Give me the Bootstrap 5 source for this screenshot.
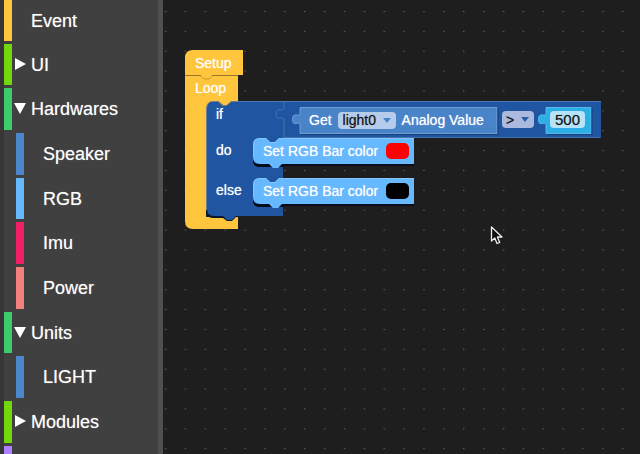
<!DOCTYPE html>
<html lang="en">
<head>
<meta charset="utf-8">
<meta name="viewport" content="width=device-width, initial-scale=1">
<title>Block editor</title>
<link href="https://cdn.jsdelivr.net/npm/bootstrap@5.3.0/dist/css/bootstrap.min.css" rel="stylesheet">
<style>
body{font-family:"Liberation Sans",Arial,sans-serif;background:#1e1e1e;color:#fff}
.toolbox{width:163px;background:#404040;border-left:4px solid #363636;border-right:5px solid #505050}
.toolbox ul{grid-template-rows:44px;grid-auto-rows:44px 45px 45px}
.toolbox li{padding-bottom:3px}
.cat{font-size:18px;line-height:20px;color:#fff;border-left:8px solid var(--c);padding-left:1px;text-shadow:0 0 1px #ffffff80}
.sub-cat{padding-left:12px}
.cat .twist{width:14px;height:14px;margin-right:4px;fill:#fff}
.yellow{--c:#ffc53d}.lime{--c:#73d80b}.green{--c:#3dcb6c}.navy{--c:#4c87cb}
.sky{--c:#66b8ff}.pink{--c:#ef2164}.coral{--c:#f58080}.violet{--c:#ae80ff}
.node,.shape,.pointer{position:absolute}
.shape{left:0;top:0}
.node{font-size:14px;line-height:16px;height:16px;text-shadow:0 0 1px #ffffffb0;white-space:nowrap}
.pick{position:relative;display:block;--a:#4a84c8}
.pick::after{content:"";position:absolute;right:5px;top:6px;border:4px solid transparent;border-top:5px solid var(--a);border-bottom:0;pointer-events:none}
.pick select,.num{appearance:none;border:0;border-radius:4px;font-size:14px;line-height:16px;height:17px;color:#111;padding:0 5px;display:block;text-shadow:0 0 1px #00000060}
.pick select{background:#b5cdea;width:58px}
.pick.op{--a:#2c5ea8}
.pick.op select{background:#aab9dd;width:32px;padding:0 4px}
.num{background:#b6e3f8;width:35px;text-align:center;font-size:15px}
.get-row{gap:6px}
.rgb-row{gap:8px}
.swatch{width:23px;height:16px;border:0;border-radius:5px;background:var(--s)}
.red{--s:#fe0000}.black{--s:#000}
</style>
<script src="https://cdn.jsdelivr.net/npm/bootstrap@5.3.0/dist/js/bootstrap.bundle.min.js"></script>
</head>
<body>
<div class="d-flex vh-100 overflow-hidden">
  <nav class="toolbox flex-shrink-0 overflow-hidden" aria-label="Block categories">
    <ul class="d-grid list-unstyled m-0">
      <li><button class="cat yellow btn rounded-0 border-end-0 border-top-0 border-bottom-0 py-0 pe-0 w-100 h-100 d-flex align-items-center"><span class="twist"></span>Event</button></li>
      <li><button class="cat lime btn rounded-0 border-end-0 border-top-0 border-bottom-0 py-0 pe-0 w-100 h-100 d-flex align-items-center"><svg class="twist" viewBox="0 0 14 14"><path d="M2 0L13 6L2 12Z"/></svg>UI</button></li>
      <li><button class="cat green btn rounded-0 border-end-0 border-top-0 border-bottom-0 py-0 pe-0 w-100 h-100 d-flex align-items-center"><svg class="twist" viewBox="0 0 14 14"><path d="M1 1H13L7 12Z"/></svg>Hardwares</button></li>
      <li class="sub-cat"><button class="cat navy btn rounded-0 border-end-0 border-top-0 border-bottom-0 py-0 pe-0 w-100 h-100 d-flex align-items-center"><span class="twist"></span>Speaker</button></li>
      <li class="sub-cat"><button class="cat sky btn rounded-0 border-end-0 border-top-0 border-bottom-0 py-0 pe-0 w-100 h-100 d-flex align-items-center"><span class="twist"></span>RGB</button></li>
      <li class="sub-cat"><button class="cat pink btn rounded-0 border-end-0 border-top-0 border-bottom-0 py-0 pe-0 w-100 h-100 d-flex align-items-center"><span class="twist"></span>Imu</button></li>
      <li class="sub-cat"><button class="cat coral btn rounded-0 border-end-0 border-top-0 border-bottom-0 py-0 pe-0 w-100 h-100 d-flex align-items-center"><span class="twist"></span>Power</button></li>
      <li><button class="cat green btn rounded-0 border-end-0 border-top-0 border-bottom-0 py-0 pe-0 w-100 h-100 d-flex align-items-center"><svg class="twist" viewBox="0 0 14 14"><path d="M1 1H13L7 12Z"/></svg>Units</button></li>
      <li class="sub-cat"><button class="cat navy btn rounded-0 border-end-0 border-top-0 border-bottom-0 py-0 pe-0 w-100 h-100 d-flex align-items-center"><span class="twist"></span>LIGHT</button></li>
      <li><button class="cat lime btn rounded-0 border-end-0 border-top-0 border-bottom-0 py-0 pe-0 w-100 h-100 d-flex align-items-center"><svg class="twist" viewBox="0 0 14 14"><path d="M2 0L13 6L2 12Z"/></svg>Modules</button></li>
      <li><button class="cat violet btn rounded-0 border-end-0 border-top-0 border-bottom-0 py-0 pe-0 w-100 h-100" aria-label="More"></button></li>
    </ul>
  </nav>
  <main class="position-relative flex-grow-1 overflow-hidden">
    <svg class="shape w-100 h-100" aria-hidden="true">
      <defs>
        <pattern id="dots" x="1.8" y="11" width="19.88" height="19.87" patternUnits="userSpaceOnUse"><rect width="1.5" height="1" fill="#606060"/></pattern>
      </defs>
      <rect width="100%" height="100%" fill="url(#dots)"/>
      <!-- shapes share one coordinate space, 163 wide toolbox included -->
      <g transform="translate(-163 0)">
        <path fill="#ffc53d" d="M185 76H238V102H206V217H238V229H193Q185 229 185 221V76Z"/>
        <path fill="#ffc53d" d="M193 50H243V75H213L209 79H204L200 75H185V58Q185 50 193 50Z"/>
        <path fill="none" stroke="#b98c2a" stroke-width=".8" d="M185 75.500H200L204 79H209L213 75.500H238"/>
        <path fill="#071830" d="M206 206V210Q206 218 213 218H223L227 221H232L236 217H238V208H214Z"/>
        <path fill="#2056a1" d="M214 101H219L223 105H227L231 101H601V138H283V216H236L232 220H227L223 216H214Q207 216 207 209V108Q207 101 214 101Z"/>
        <path fill="#ffc53d" d="M206 101H214Q207 101 207 108H206ZM218 101H232L227 105H223Z"/>
        <path fill="none" stroke="#6d7f95" d="M206.500 210V108Q207 101.500 213 101.500H218L222 105.500H227L231 101.500H238"/>
        <path fill="none" stroke="#4d78b5" d="M238 101.500H601"/>
        <path fill="none" stroke="#4472b0" d="M600 137.500H284M284 138V120C284 115 276 122 276 114C276 106 284 113 284 108V102"/>
        <g id="rgb-block">
          <path fill="#1e1e1e" d="M260 160H284V167H260Q253 167 253 160Z"/>
          <path fill="#050d1b" d="M253 150V160Q253 167 260 167H284V166H414V160H260Z"/>
          <path fill="#66b8ff" d="M260 138H266L270 142H275L279 138H414V164H282L278 168H273L269 164H260Q253 164 253 157V145Q253 138 260 138Z"/>
          <path fill="none" stroke="#8ac8ff" stroke-width=".8" d="M253.500 157V145Q253.500 138.500 260 138.500H266L270 142.500H275L279 138.500H414"/>
        </g>
        <use href="#rgb-block" y="40"/>
        <path fill="#1e1e1e" d="M283 167H414V178H283Z" opacity="0"/>
        <path fill="#4a84c8" stroke="#7ea8da" stroke-width=".8" d="M300 107.500H497V133.500H300V125C300 120 292.500 128 292.500 119.500C292.500 111 300 118 300 113Z"/>
        <path fill="none" stroke="#173f78" d="M301 134.500H498V108"/>
        <path fill="#2bafe6" stroke="#65c6ee" stroke-width=".8" d="M546 107.500H591V133.500H546V125C546 120 538.500 128 538.500 119.500C538.500 111 546 118 546 113Z"/>
        <path fill="none" stroke="#173f78" d="M547 134.500H592V108"/>
      </g>
    </svg>
    <span class="node" style="left:32px;top:55px">Setup</span>
    <span class="node" style="left:32px;top:80px">Loop</span>
    <span class="node" style="left:53px;top:106px">if</span>
    <span class="node" style="left:53px;top:142px">do</span>
    <span class="node" style="left:53px;top:182px">else</span>
    <div class="node get-row d-flex align-items-center" style="left:146px;top:112px">
      <label for="unit">Get</label>
      <span class="pick"><select id="unit"><option>light0</option></select></span>
      <span>Analog Value</span>
    </div>
    <div class="node" style="left:339px;top:111px"><span class="pick op"><select aria-label="Comparison"><option>&gt;</option></select></span></div>
    <div class="node" style="left:387px;top:111px"><input class="num" aria-label="Number" value="500"></div>
    <div class="node rgb-row d-flex align-items-center" style="left:100px;top:143px"><span>Set RGB Bar color</span><button class="swatch red" aria-label="Bar color when true"></button></div>
    <div class="node rgb-row d-flex align-items-center" style="left:100px;top:183px"><span>Set RGB Bar color</span><button class="swatch black" aria-label="Bar color otherwise"></button></div>
    <svg class="pointer" style="left:327px;top:225px" width="14" height="21" viewBox="0 0 14 21" aria-hidden="true"><path d="M1.500 2V16L4.800 13L7 18.500L9.700 17.400L7.400 12H12Z" fill="#111" stroke="#eee" stroke-width="1.300" stroke-linejoin="round"/></svg>
  </main>
</div>
</body>
</html>
